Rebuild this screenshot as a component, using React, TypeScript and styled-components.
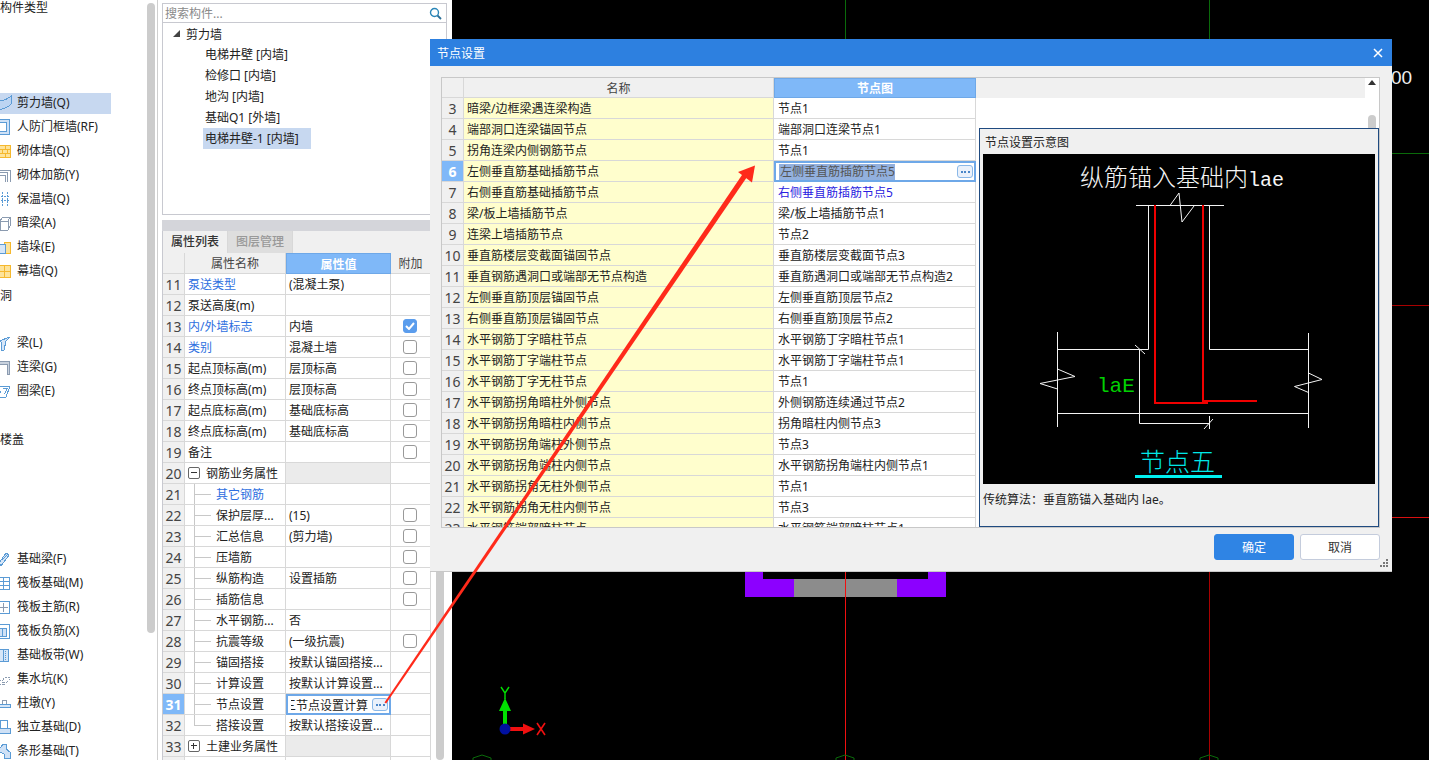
import React from "react";
import styled, { createGlobalStyle } from "styled-components";

const Global = createGlobalStyle`
  html, body { margin: 0; padding: 0; background: #fff; overflow: hidden; }
  * { box-sizing: border-box; }
  body { font-family: "Noto Sans", "Noto Sans CJK SC", sans-serif; font-size: 12px; color: #222; }
`;

const Page = styled.div`
  position: relative;
  display: flex;
  width: 1429px;
  height: 760px;
  overflow: hidden;
`;

/* ---------- left component type list ---------- */
const LeftPane = styled.aside`
  flex: 0 0 158px;
  display: flex;
  height: 760px;
  border-right: 1px solid #cfcfcf;
  background: #fff;
`;
const TypeList = styled.div`
  width: 147px;
  margin-top: -5px;
`;
const GroupTitle = styled.div`
  height: 24px;
  line-height: 25px;
  white-space: nowrap;
`;
const Blank = styled.div<{ $rows: number }>`
  height: ${(p) => p.$rows * 24}px;
`;
const TypeRow = styled.div`
  height: 24px;
  display: flex;
  align-items: center;
`;
const TypeInner = styled.div<{ $on?: boolean }>`
  width: 111px;
  height: 21px;
  display: flex;
  align-items: center;
  gap: 5px;
  white-space: nowrap;
  background: ${(p) => (p.$on ? "#c7d8f0" : "transparent")};
`;
const TypeLabel = styled.span`
  padding-bottom: 2px;
`;
const Track = styled.div<{ $gap?: number }>`
  flex: 0 0 8px;
  width: 8px;
  margin-left: ${(p) => p.$gap ?? 0}px;
`;
const Thumb = styled.div<{ $top: number; $h: number }>`
  margin-top: ${(p) => p.$top}px;
  height: ${(p) => p.$h}px;
  background: #cccccc;
  border-radius: 4px;
`;

/* ---------- middle column ---------- */
const MiddlePane = styled.section`
  flex: 0 0 294px;
  padding: 3px 0 0 4px;
  background: #fff;
`;
const SearchBox = styled.div`
  width: 285px;
  height: 20px;
  display: flex;
  align-items: center;
  justify-content: space-between;
  padding: 0 4px 0 2px;
  border: 1px solid #c8c9d0;
  color: #8a8a8a;
`;
const Tree = styled.div`
  width: 285px;
  height: 192px;
  border: 1px solid #c8c9d0;
  border-top: none;
`;
const TreeRoot = styled.div`
  height: 21px;
  display: flex;
  align-items: center;
  gap: 5px;
  padding-left: 9px;
`;
const TreeItem = styled.div<{ $on?: boolean }>`
  width: fit-content;
  min-width: 108px;
  height: 21px;
  line-height: 21px;
  margin-left: 40px;
  padding: 0 3px 0 2px;
  white-space: nowrap;
  background: ${(p) => (p.$on ? "#c7d8f0" : "transparent")};
`;
const Band = styled.div`
  height: 11px;
  margin-top: 5px;
  width: 285px;
  background: #d4d5da;
`;
const Tabs = styled.div`
  width: 285px;
  height: 22px;
  display: flex;
  background: #f0f0f0;
  border-left: 1px solid #c8c9d0;
`;
const Tab = styled.div<{ $on?: boolean }>`
  width: 65px;
  text-align: center;
  line-height: 22px;
  font-weight: 500;
  color: ${(p) => (p.$on ? "#333" : "#999")};
  background: ${(p) => (p.$on ? "#f0f0f0" : "#dedede")};
  border-right: 1px solid #d8d8d8;
`;
const PropArea = styled.div`
  display: flex;
`;
const PropGrid = styled.div`
  width: 269px;
  flex: 0 0 269px;
  display: grid;
  grid-template-columns: 22px 101px 105px 40px;
  grid-auto-rows: 21px;
  border-left: 1px solid #c8c9d0;
`;
const Cell = styled.div<{ $fill?: string; $pad?: number; $color?: string }>`
  position: relative;
  display: flex;
  align-items: center;
  min-width: 0;
  white-space: nowrap;
  overflow: hidden;
  padding-left: ${(p) => p.$pad ?? 3}px;
  border-right: 1px solid #d8d8d8;
  border-bottom: 1px solid #d8d8d8;
  color: ${(p) => p.$color ?? "inherit"};
  background: ${(p) => p.$fill ?? "#fff"};
`;
const HeadCell = styled(Cell)<{ $active?: boolean }>`
  justify-content: center;
  padding-left: 0;
  color: ${(p) => (p.$active ? "#fff" : "#444")};
  font-weight: ${(p) => (p.$active ? 700 : 400)};
  background: ${(p) => (p.$active ? "#7fb8f8" : "#f0f0f0")};
  border: ${(p) => (p.$active ? "1px solid #6ea8e8" : "")};
  ${(p) => (p.$active ? "" : "border-right:1px solid #d8d8d8;border-bottom:1px solid #d8d8d8;")}
`;
const NumCell = styled(Cell)<{ $active?: boolean }>`
  justify-content: center;
  padding-left: 0;
  font-size: 14px;
  color: ${(p) => (p.$active ? "#fff" : "#444")};
  font-weight: ${(p) => (p.$active ? 700 : 400)};
  background: ${(p) => (p.$active ? "#7fb8f8" : "#f0f0f0")};
`;
const BranchCell = styled(Cell)<{ $last?: boolean }>`
  padding-left: 31px;
  overflow: hidden;
  &::before {
    content: "";
    position: absolute;
    left: 9px;
    top: 0;
    width: 16px;
    height: 10px;
    border-left: 1px solid #c8c8c8;
    border-bottom: 1px solid #c8c8c8;
  }
  &::after {
    content: "";
    position: absolute;
    left: 9px;
    top: 10px;
    bottom: -1px;
    border-left: ${(p) => (p.$last ? "none" : "1px solid #c8c8c8")};
  }
`;
const EditCell = styled(Cell)`
  justify-content: space-between;
  padding: 0 1px 0 3px;
  border: 2px solid #6ea8e8;
`;
const EditValue = styled.span`
  display: flex;
  align-items: center;
`;
const ClippedGlyph = styled.span`
  flex: 0 0 5px;
  width: 5px;
  overflow: hidden;
  text-indent: -7px;
`;
const MoreButton = styled.span`
  flex: 0 0 16px;
  width: 16px;
  height: 13px;
  display: flex;
  align-items: center;
  justify-content: center;
  gap: 1.5px;
  border: 1px solid #8ab8e8;
  border-radius: 3px;
  background: #eaf1fb;
`;
const Dot = styled.i`
  width: 2px;
  height: 2px;
  background: #4a86c8;
`;
const Expander = styled.span`
  position: relative;
  flex: 0 0 12px;
  width: 12px;
  height: 12px;
  margin-right: 6px;
  border: 1px solid #666;
  border-radius: 2px;
  &::before {
    content: "";
    position: absolute;
    left: 2px;
    right: 2px;
    top: 4px;
    height: 1px;
    background: #333;
  }
`;
const ExpanderPlus = styled(Expander)`
  &::after {
    content: "";
    position: absolute;
    top: 2px;
    bottom: 2px;
    left: 4px;
    width: 1px;
    background: #333;
  }
`;
const CheckBox = styled.span<{ $on?: boolean }>`
  width: 14px;
  height: 14px;
  margin-left: 9px;
  border-radius: 3px;
  display: flex;
  align-items: center;
  justify-content: center;
  border: 1px solid ${(p) => (p.$on ? "#5b9ded" : "#999")};
  background: ${(p) => (p.$on ? "#5b9ded" : "#fff")};
`;

/* ---------- canvas ---------- */
const CanvasPane = styled.main`
  flex: 1;
  background: #000;
  height: 760px;
  overflow: hidden;
`;

/* ---------- dialog ---------- */
const Dialog = styled.div`
  position: absolute;
  left: 430px;
  top: 39px;
  width: 962px;
  height: 533px;
  display: flex;
  flex-direction: column;
  background: #f0f0f0;
  border-bottom: 1px solid #c8c8c8;
`;
const TitleBar = styled.header`
  flex: 0 0 27px;
  display: flex;
  align-items: center;
  justify-content: space-between;
  padding: 0 9px 0 7px;
  color: #fff;
  background: #2d80e0;
`;
const DialogBody = styled.div`
  flex: 0 0 451px;
  margin: 11px 12px 0 11px;
  display: flex;
  background: #fff;
  border: 1px solid #c8c8c8;
  overflow: hidden;
`;
const NodeGrid = styled.div`
  flex: 0 0 534px;
  display: grid;
  grid-template-columns: 22px 310px 202px;
  grid-template-rows: 20px;
  grid-auto-rows: 21px;
  align-content: start;
  height: 449px;
  overflow: hidden;
`;
const RightSide = styled.div`
  flex: 1;
  display: flex;
  flex-direction: column;
`;
const HeadStrip = styled.div`
  height: 20px;
  display: flex;
`;
const HeadFill = styled.div`
  width: 389px;
  background: #f0f0f0;
`;
const ScrollUp = styled.div`
  flex: 1;
  display: flex;
  justify-content: center;
  padding-top: 2px;
`;
const UpArrow = styled.div`
  width: 0;
  height: 0;
  border-left: 4px solid transparent;
  border-right: 4px solid transparent;
  border-bottom: 5px solid #333;
`;
const ThumbStrip = styled.div`
  height: 30px;
  display: flex;
  justify-content: flex-end;
  padding-right: 3px;
  align-items: flex-end;
`;
const SmallThumb = styled.div`
  width: 8px;
  height: 13px;
  background: #cccccc;
  border-radius: 4px 4px 0 0;
`;
const Schematic = styled.div`
  margin-left: 3px;
  flex: 1;
  display: flex;
  flex-direction: column;
  padding: 0 3px;
  background: #f0f0f0;
  border: 1px solid #1f4a80;
`;
const SchematicTitle = styled.div`
  flex: 0 0 25px;
  height: 25px;
  min-height: 0;
  padding-top: 6px;
  line-height: 16px;
  padding-left: 2px;
`;
const DrawingBox = styled.div`
  flex: 0 0 330px;
  width: 392px;
  height: 330px;
  background: #000;
`;
const Caption = styled.div`
  line-height: 31px;
`;
const SelectedText = styled.span`
  line-height: 16px;
  padding: 0 0 0 1px;
  background: #92b0de;
  color: #555;
`;
const Footer = styled.footer`
  display: flex;
  justify-content: flex-end;
  gap: 6px;
  padding: 6px 12px 0 0;
`;
const Btn = styled.button<{ $primary?: boolean }>`
  width: 80px;
  height: 26px;
  padding: 0;
  border-radius: 3px;
  font: inherit;
  border: 1px solid ${(p) => (p.$primary ? "#2f84e4" : "#c4ccdc")};
  background: ${(p) => (p.$primary ? "#2f84e4" : "#fff")};
  color: ${(p) => (p.$primary ? "#fff" : "#333")};
`;
const Grip = styled.svg`
  position: absolute;
  right: 3px;
  bottom: 3px;
`;
const ArrowLayer = styled.svg`
  position: absolute;
  left: 0;
  top: 0;
  pointer-events: none;
`;

/* ---------- icons ---------- */
const B = "#5b9bd5";
const O = "#f5b82e";
const G = "#8b9bb0";
const icons: Record<string, React.ReactNode> = {
  shear: <path d="M-4 6Q6 6 11 1V9Q7 14-4 15Z" fill="#bcd4f2" stroke={B} />,
  frame: (<><rect x="-3" y=".5" width="12" height="15" fill="#cfe1f6" stroke={B} /><rect x="-3" y="3.5" width="9" height="9" fill="#fff" stroke={B} /></>),
  brick: (<><rect x="-2" y="2" width="12" height="12" fill="#fde39a" stroke={O} /><path d="M-2 6H10M-2 10H10M5 2V6M2 6V10M7 6V10M5 10V14" stroke={O} fill="none" /></>),
  rebar: <path d="M-3 3H10V15M-3 5.5H7.5V15M-3 8H5V15" stroke={G} fill="none" />,
  insul: <path d="M2.5 1V15M7.5 1V15M-2 5H10M-2 9H10" stroke={B} strokeDasharray="2 1" fill="none" />,
  hidden: <path d="M0 6L3 2H10V11L8 15H0ZM0 6H8V15M8 6L10 2" fill="#fff" stroke={G} />,
  pier: (<><rect x="4" y="3" width="6" height="11" fill="#fde39a" stroke={O} /><path d="M-2 5H5V14H-2Z" fill="#d6e6f8" stroke={B} /></>),
  curtain: (<><rect x="-2" y="2" width="12" height="12" fill="#fde39a" stroke={O} /><path d="M4 2V14M-2 8H10" stroke={O} /></>),
  beam: <path d="M-1 6L10 2L6 6L4 15H1V7Z" fill="#d6e6f8" stroke={B} />,
  link: <path d="M-3 2H9V15H7V5H-3Z" fill="#c9d2de" stroke={G} />,
  ring: <path d="M0 3H10L6 14H-3L1 8M3 5.5H7L4.5 11" fill="none" stroke={B} />,
  fbeam: <path d="M-1 12L6 2L9 4L1 15ZM2 9L7 4" fill="#d6e6f8" stroke={B} />,
  raft: (<><rect x="-3" y="2" width="12" height="12" fill="#fff" stroke={B} /><path d="M3 2V14M-3 6H9M-3 10H9" stroke={B} /></>),
  main: (<><rect x="-3" y="2" width="12" height="12" fill="#fff" stroke={B} /><path d="M3 4V13M0 8H8" stroke={G} /></>),
  neg: (<><rect x="-3" y="1" width="12" height="14" fill="#fff" stroke={B} /><rect x="-3" y="5" width="9" height="8" fill="#cfe1f6" stroke={B} /><path d="M2 5V13" stroke={B} /></>),
  strip: (<><rect x="-3" y="2" width="11" height="12" fill="#d6e6f8" stroke={B} /><path d="M3 2V14" stroke={B} /><path d="M5.5 4V13" stroke={B} strokeDasharray="1 1" /></>),
  pit: <path d="M-2 9H3L5 6H10M-2 9V13H5L10 8M2 11H6" fill="none" stroke={G} strokeDasharray="3 1" />,
  cap: (<><path d="M2 5H6V9H2Z" fill="#fff" stroke={G} /><path d="M-3 9H10V12H-3Z" fill="#d6e6f8" stroke={B} /></>),
  found: (<><path d="M0 1H7V9H0Z" fill="#fff" stroke={B} /><path d="M-2 9H10V14H-2Z" fill="#cfe1f6" stroke={B} /></>),
  bar: <path d="M-2 8L3 1H6V6L10 9V15H4V11Z" fill="#cfe1f6" stroke={B} />,
};
const Icon = ({ name }: { name: string }) => (
  <svg width="12" height="16" viewBox="0 0 12 16" style={{ flex: "0 0 12px" }} shapeRendering="crispEdges">
    {icons[name]}
  </svg>
);

const Type = ({ icon, label, on }: { icon: string; label: string; on?: boolean }) => (
  <TypeRow>
    <TypeInner $on={on}>
      <Icon name={icon} />
      <TypeLabel>{label}</TypeLabel>
    </TypeInner>
  </TypeRow>
);

/* ---------- data ---------- */
type Prop = {
  n: number;
  name: string;
  value?: string;
  blue?: boolean;
  check?: "on" | "off";
  kind?: "group" | "groupClosed" | "branch" | "last" | "edit";
};
const props: Prop[] = [
  { n: 11, name: "泵送类型", value: "(混凝土泵)", blue: true },
  { n: 12, name: "泵送高度(m)" },
  { n: 13, name: "内/外墙标志", value: "内墙", blue: true, check: "on" },
  { n: 14, name: "类别", value: "混凝土墙", blue: true, check: "off" },
  { n: 15, name: "起点顶标高(m)", value: "层顶标高", check: "off" },
  { n: 16, name: "终点顶标高(m)", value: "层顶标高", check: "off" },
  { n: 17, name: "起点底标高(m)", value: "基础底标高", check: "off" },
  { n: 18, name: "终点底标高(m)", value: "基础底标高", check: "off" },
  { n: 19, name: "备注", check: "off" },
  { n: 20, name: "钢筋业务属性", kind: "group" },
  { n: 21, name: "其它钢筋", kind: "branch", blue: true },
  { n: 22, name: "保护层厚...", value: "(15)", kind: "branch", check: "off" },
  { n: 23, name: "汇总信息", value: "(剪力墙)", kind: "branch", check: "off" },
  { n: 24, name: "压墙筋", kind: "branch", check: "off" },
  { n: 25, name: "纵筋构造", value: "设置插筋", kind: "branch", check: "off" },
  { n: 26, name: "插筋信息", kind: "branch", check: "off" },
  { n: 27, name: "水平钢筋...", value: "否", kind: "branch" },
  { n: 28, name: "抗震等级", value: "(一级抗震)", kind: "branch", check: "off" },
  { n: 29, name: "锚固搭接", value: "按默认锚固搭接...", kind: "branch" },
  { n: 30, name: "计算设置", value: "按默认计算设置...", kind: "branch" },
  { n: 31, name: "节点设置", kind: "branch" },
  { n: 32, name: "搭接设置", value: "按默认搭接设置...", kind: "last" },
  { n: 33, name: "土建业务属性", kind: "groupClosed" },
  { n: 34, name: "" },
];

const nodes: [number, string, string][] = [
  [3, "暗梁/边框梁遇连梁构造", "节点1"],
  [4, "端部洞口连梁锚固节点", "端部洞口连梁节点1"],
  [5, "拐角连梁内侧钢筋节点", "节点1"],
  [6, "左侧垂直筋基础插筋节点", "左侧垂直筋插筋节点5"],
  [7, "右侧垂直筋基础插筋节点", "右侧垂直筋插筋节点5"],
  [8, "梁/板上墙插筋节点", "梁/板上墙插筋节点1"],
  [9, "连梁上墙插筋节点", "节点2"],
  [10, "垂直筋楼层变截面锚固节点", "垂直筋楼层变截面节点3"],
  [11, "垂直钢筋遇洞口或端部无节点构造", "垂直筋遇洞口或端部无节点构造2"],
  [12, "左侧垂直筋顶层锚固节点", "左侧垂直筋顶层节点2"],
  [13, "右侧垂直筋顶层锚固节点", "右侧垂直筋顶层节点2"],
  [14, "水平钢筋丁字暗柱节点", "水平钢筋丁字暗柱节点1"],
  [15, "水平钢筋丁字端柱节点", "水平钢筋丁字端柱节点1"],
  [16, "水平钢筋丁字无柱节点", "节点1"],
  [17, "水平钢筋拐角暗柱外侧节点", "外侧钢筋连续通过节点2"],
  [18, "水平钢筋拐角暗柱内侧节点", "拐角暗柱内侧节点3"],
  [19, "水平钢筋拐角端柱外侧节点", "节点3"],
  [20, "水平钢筋拐角端柱内侧节点", "水平钢筋拐角端柱内侧节点1"],
  [21, "水平钢筋拐角无柱外侧节点", "节点1"],
  [22, "水平钢筋拐角无柱内侧节点", "节点3"],
  [23, "水平钢筋端部暗柱节点", "水平钢筋端部暗柱节点1"],
];

const More = () => (
  <MoreButton>
    <Dot />
    <Dot />
    <Dot />
  </MoreButton>
);

const PropRow = ({ p }: { p: Prop }) => {
  const group = p.kind === "group" || p.kind === "groupClosed";
  const nameColor = p.blue ? "#2e6fe0" : undefined;
  return (
    <>
      <NumCell $active={p.n === 31}>{p.n}</NumCell>
      {p.kind === "branch" || p.kind === "last" ? (
        <BranchCell $last={p.kind === "last"} $color={nameColor}>{p.name}</BranchCell>
      ) : (
        <Cell $color={nameColor}>
          {p.kind === "group" && <Expander />}
          {p.kind === "groupClosed" && <ExpanderPlus />}
          {p.name}
        </Cell>
      )}
      {p.n === 31 ? (
        <EditCell>
          <EditValue>
            <ClippedGlyph>三</ClippedGlyph>节点设置计算
          </EditValue>
          <More />
        </EditCell>
      ) : (
        <Cell $fill={group ? "#ebebeb" : undefined}>{p.value}</Cell>
      )}
      <Cell $pad={3}>
        {p.check && (
          <CheckBox $on={p.check === "on"}>
            {p.check === "on" && (
              <svg width="10" height="8" viewBox="0 0 10 8">
                <path d="M1 4l3 3 5-6" stroke="#fff" strokeWidth="2" fill="none" />
              </svg>
            )}
          </CheckBox>
        )}
      </Cell>
    </>
  );
};

const W = "#f4f4f4";

const Drawing = () => (
  <svg width="392" height="330" viewBox="983 154 392 330" style={{ display: "block" }}>
    <g stroke={W} strokeWidth="1" fill="none">
      <path d="M1136 205.5H1224" />
      <path d="M1170 205.5L1179 193L1182 222L1194 206" />
      <path d="M1148.5 205.5V349.5H1057.5" />
      <path d="M1209.5 205.5V349.5H1308.5" />
      <path d="M1057.5 332V427M1308.5 333V428M1057.5 413.5H1308.5" />
      <path d="M1057.5 389L1040 383.5L1075 376.5L1057.5 369" />
      <path d="M1308.5 392.5L1294.5 386.5L1322 379.5L1308.5 373" />
      <path d="M1139.5 349.5V423.5H1209.5M1209.5 416V429M1204 429L1213 419M1135 345L1145 354" />
    </g>
    <g stroke="#f00000" strokeWidth="2" fill="none">
      <path d="M1155 205V403H1208" />
      <path d="M1203 205V401H1257" />
    </g>
    <text x="1080" y="186" fontSize="24" fontWeight="300" fill="#f6f6f6" fontFamily='"Noto Sans CJK SC", sans-serif'>
      纵筋锚入基础内<tspan fontFamily='"Liberation Mono", monospace' fontSize="20">lae</tspan>
    </text>
    <text x="1097" y="392" fontSize="21" fill="#00d000" fontFamily='"Liberation Mono", monospace'>laE</text>
    <text x="1140" y="471" fontSize="25" fontWeight="300" fill="#00e8e8" fontFamily='"Noto Sans CJK SC", sans-serif'>节点五</text>
    <path d="M1135 476.5H1222" stroke="#00f0f0" strokeWidth="3" />
  </svg>
);

const Hex = ({ x }: { x: number }) => (
  <path d={`M${x - 9} 760V758L${x} 755L${x + 9} 758V760`} stroke="#0a6a0a" fill="none" />
);

const CanvasArt = () => (
  <svg width="977" height="760" viewBox="452 0 977 760" style={{ display: "block" }}>
    <path d="M845.5 0V40M1209.5 0V40M1392 153.5H1429" stroke="#0a6a0a" />
    <path d="M1392 305.5H1429M1209.5 572V760" stroke="#a80000" />
    <path d="M1392 517.5H1429" stroke="#d81010" />
    <text x="1391" y="84" fontSize="19" fill="#eee" fontFamily='"Liberation Sans", sans-serif'>00</text>
    <rect x="745" y="570" width="201" height="27" fill="#8c00ff" />
    <rect x="763" y="570" width="165" height="9" fill="#000" />
    <rect x="794" y="579" width="103" height="18" fill="#8c8c8c" />
    <path d="M845.5 572V760" stroke="#f01010" />
    <Hex x={482} />
    <Hex x={845} />
    <Hex x={1209} />
    <path d="M503 729V711H507V729Z" fill="#00e000" />
    <path d="M505 698L511 711H499Z" fill="#00e000" />
    <path d="M505 727H524V731H505Z" fill="#f01010" />
    <path d="M535 729L523 723.5V734.5Z" fill="#f01010" />
    <circle cx="505" cy="729" r="5.5" fill="#0010a0" />
    <path d="M501 687L505 693V699M509 687L505 693" stroke="#00e000" strokeWidth="1.4" fill="none" />
    <path d="M537 723L545 735M545 723L537 735" stroke="#f01010" strokeWidth="1.6" fill="none" />
  </svg>
);

export default function App() {
  return (
    <Page>
      <Global />
      <LeftPane>
        <TypeList>
          <GroupTitle>构件类型</GroupTitle>
          <Blank $rows={3} />
          <Type icon="shear" label="剪力墙(Q)" on />
          <Type icon="frame" label="人防门框墙(RF)" />
          <Type icon="brick" label="砌体墙(Q)" />
          <Type icon="rebar" label="砌体加筋(Y)" />
          <Type icon="insul" label="保温墙(Q)" />
          <Type icon="hidden" label="暗梁(A)" />
          <Type icon="pier" label="墙垛(E)" />
          <Type icon="curtain" label="幕墙(Q)" />
          <GroupTitle>洞</GroupTitle>
          <Blank $rows={1} />
          <Type icon="beam" label="梁(L)" />
          <Type icon="link" label="连梁(G)" />
          <Type icon="ring" label="圈梁(E)" />
          <Blank $rows={1} />
          <GroupTitle>楼盖</GroupTitle>
          <Blank $rows={4} />
          <Type icon="fbeam" label="基础梁(F)" />
          <Type icon="raft" label="筏板基础(M)" />
          <Type icon="main" label="筏板主筋(R)" />
          <Type icon="neg" label="筏板负筋(X)" />
          <Type icon="strip" label="基础板带(W)" />
          <Type icon="pit" label="集水坑(K)" />
          <Type icon="cap" label="柱墩(Y)" />
          <Type icon="found" label="独立基础(D)" />
          <Type icon="bar" label="条形基础(T)" />
        </TypeList>
        <Track>
          <Thumb $top={3} $h={630} />
        </Track>
      </LeftPane>

      <MiddlePane>
        <SearchBox>
          <span>搜索构件...</span>
          <svg width="13" height="13" viewBox="0 0 13 13">
            <circle cx="5.5" cy="5.5" r="4" fill="none" stroke="#2a86b8" strokeWidth="1.4" />
            <path d="M8.5 8.5L12 12" stroke="#2a6f98" strokeWidth="1.8" />
          </svg>
        </SearchBox>
        <Tree>
          <TreeRoot>
            <svg width="9" height="9" viewBox="0 0 9 9">
              <path d="M8 1V8H1Z" fill="#444" />
            </svg>
            <span>剪力墙</span>
          </TreeRoot>
          <TreeItem>电梯井壁 [内墙]</TreeItem>
          <TreeItem>检修口 [内墙]</TreeItem>
          <TreeItem>地沟 [内墙]</TreeItem>
          <TreeItem>基础Q1 [外墙]</TreeItem>
          <TreeItem $on>电梯井壁-1 [内墙]</TreeItem>
        </Tree>
        <Band />
        <Tabs>
          <Tab $on>属性列表</Tab>
          <Tab>图层管理</Tab>
        </Tabs>
        <PropArea>
          <PropGrid>
            <HeadCell />
            <HeadCell>属性名称</HeadCell>
            <HeadCell $active>属性值</HeadCell>
            <HeadCell>附加</HeadCell>
            {props.map((p) => (
              <PropRow key={p.n} p={p} />
            ))}
          </PropGrid>
          <Track $gap={5}>
            <Thumb $top={0} $h={507} />
          </Track>
        </PropArea>
      </MiddlePane>

      <CanvasPane>
        <CanvasArt />
      </CanvasPane>

      <Dialog>
        <TitleBar>
          <span>节点设置</span>
          <svg width="10" height="10" viewBox="0 0 10 10">
            <path d="M1 1L9 9M9 1L1 9" stroke="#fff" strokeWidth="1.5" />
          </svg>
        </TitleBar>
        <DialogBody>
          <NodeGrid>
            <HeadCell />
            <HeadCell>名称</HeadCell>
            <HeadCell $active>节点图</HeadCell>
            {nodes.map(([n, name, val]) => (
              <React.Fragment key={n}>
                <NumCell $active={n === 6}>{n}</NumCell>
                <Cell $fill="#fffecd">{name}</Cell>
                {n === 6 ? (
                  <EditCell>
                    <SelectedText>{val}</SelectedText>
                    <More />
                  </EditCell>
                ) : (
                  <Cell $pad={4} $color={n === 7 ? "#2a22e0" : undefined}>{val}</Cell>
                )}
              </React.Fragment>
            ))}
          </NodeGrid>
          <RightSide>
            <HeadStrip>
              <HeadFill />
              <ScrollUp>
                <UpArrow />
              </ScrollUp>
            </HeadStrip>
            <ThumbStrip>
              <SmallThumb />
            </ThumbStrip>
            <Schematic>
              <SchematicTitle>节点设置示意图</SchematicTitle>
              <DrawingBox>
                <Drawing />
              </DrawingBox>
              <Caption>传统算法：垂直筋锚入基础内 lae。</Caption>
            </Schematic>
          </RightSide>
        </DialogBody>
        <Footer>
          <Btn $primary>确定</Btn>
          <Btn>取消</Btn>
        </Footer>
        <Grip width="9" height="9" viewBox="0 0 9 9">
          <path d="M6 0h2v2H6zM3 3h2v2H3zM6 3h2v2H6zM0 6h2v2H0zM3 6h2v2H3zM6 6h2v2H6z" fill="#777" />
        </Grip>
      </Dialog>

      <ArrowLayer width="1429" height="760" viewBox="0 0 1429 760">
        <path d="M384.5 702.5L386.2 703.6L747 177L743 173.5Z" fill="#ff2a1a" />
        <path d="M755 165.5L738 172L752 182.5Z" fill="#ff2a1a" />
      </ArrowLayer>
    </Page>
  );
}
